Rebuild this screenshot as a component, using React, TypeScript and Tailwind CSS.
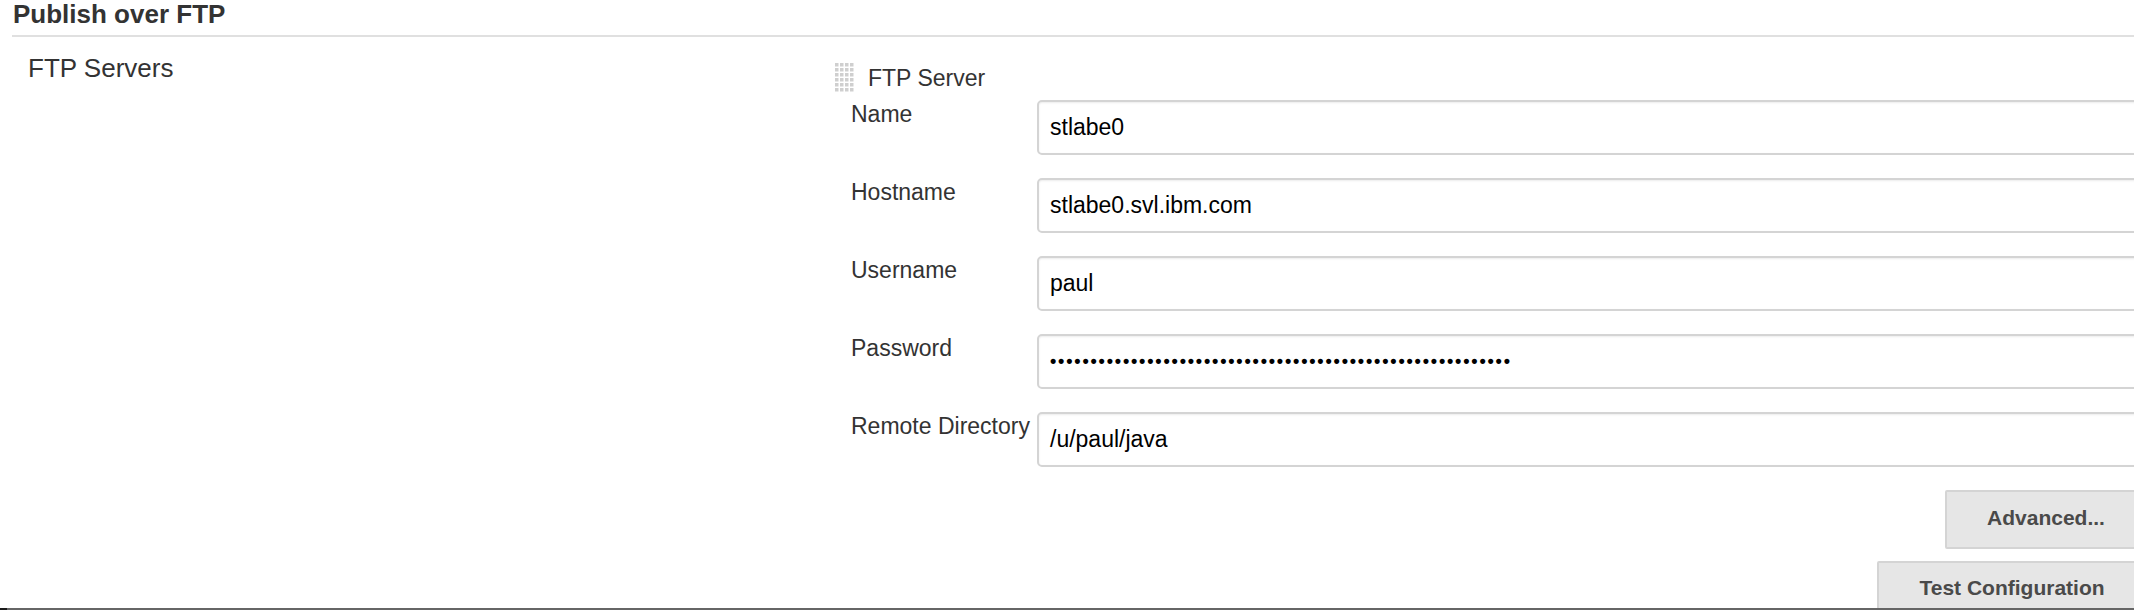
import React from "react";

const fields = [
  { label: "Name", value: "stlabe0" },
  { label: "Hostname", value: "stlabe0.svl.ibm.com" },
  { label: "Username", value: "paul" },
  { label: "Password", value: "", secret: 57 },
  { label: "Remote Directory", value: "/u/paul/java" },
];

function Grip() {
  const cells = [];
  for (let r = 0; r < 6; r++) {
    for (let c = 0; c < 4; c++) {
      cells.push(<rect key={`${r}-${c}`} x={c * 5} y={r * 5} width="3.5" height="3.5" fill="#cfcfcf" />);
    }
  }
  return (
    <svg width="19" height="30" viewBox="0 0 19 30" className="shrink-0">
      {cells}
    </svg>
  );
}

function Field({ label, value, secret }: { label: string; value: string; secret?: number }) {
  return (
    <div className="flex h-[55px]">
      <div className="w-[202px] shrink-0 whitespace-nowrap pl-4 pt-[1px] text-[23px] leading-[26px] text-[#333]">{label}</div>
      <div className="flex flex-1 items-center rounded-[5px] border-2 border-[#d4d4d4] bg-white pl-[11px] shadow-[inset_0_1px_2px_rgba(0,0,0,0.08)]">
        {secret ? (
          <span className="text-[18px] font-bold tracking-[1.8px] text-black">{"•".repeat(secret)}</span>
        ) : (
          <span className="text-[23px] text-black">{value}</span>
        )}
      </div>
    </div>
  );
}

export default function App() {
  return (
    <div className="h-[610px] w-[2134px] overflow-hidden bg-white font-['Liberation_Sans',Arial,sans-serif]">
      <div className="h-[608px] w-[2147px] overflow-hidden">
        <div className="ml-3 border-b-2 border-[#e0e0e0] pb-[7px] pl-[1px] text-[26px] font-bold leading-[28px] text-[#333]">
          Publish over FTP
        </div>
        <div className="flex">
          <div className="w-[835px] shrink-0 pl-7 pt-4 text-[26px] leading-[30px] text-[#333]">FTP Servers</div>
          <div className="flex flex-1 flex-col pt-[23px]">
            <div className="flex h-9 items-center gap-[14px]">
              <Grip />
              <span className="text-[23px] text-[#333]">FTP Server</span>
            </div>
            <div className="mt-1 flex flex-col gap-[23px]">
              {fields.map((f) => (
                <Field key={f.label} {...f} />
              ))}
            </div>
            <div className="mt-[23px] flex flex-col items-end gap-3">
              <button className="h-[59px] w-[202px] rounded-[2px] border-2 border-[#d4d4d4] bg-[#e6e6e6] pb-1 text-[21px] font-bold text-[#4a4a4a]">
                Advanced...
              </button>
              <button className="h-[59px] w-[270px] rounded-[2px] border-2 border-[#d4d4d4] bg-[#e6e6e6] pb-[6px] text-[21px] font-bold text-[#4a4a4a]">
                Test Configuration
              </button>
            </div>
          </div>
        </div>
      </div>
      <div className="flex h-[2px]">
        <div className="w-[7px] bg-[#1a1a1a]" />
        <div className="flex-1 bg-[#666]" />
      </div>
    </div>
  );
}
